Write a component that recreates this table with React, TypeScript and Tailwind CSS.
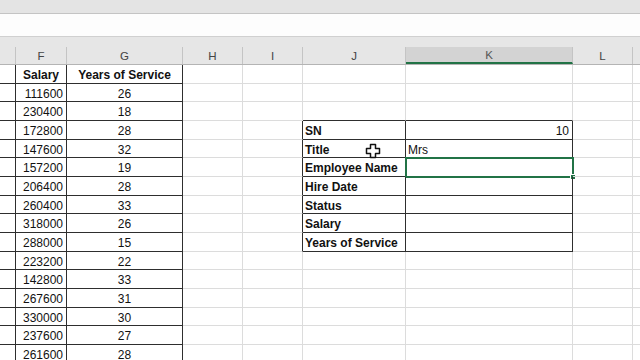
import React from 'react';

// visible columns E..M (E and M are clipped by the window)
const COLS = [
  { key: 'E', w: 'w-[16px]', label: '' },
  { key: 'F', w: 'w-[51px]', label: 'F' },
  { key: 'G', w: 'w-[116px]', label: 'G' },
  { key: 'H', w: 'w-[60px]', label: 'H' },
  { key: 'I', w: 'w-[60px]', label: 'I' },
  { key: 'J', w: 'w-[103px]', label: 'J' },
  { key: 'K', w: 'w-[167px]', label: 'K' },
  { key: 'L', w: 'w-[60px]', label: 'L' },
  { key: 'M', w: 'w-[20px]', label: '' },
];

const salaries = [
  ['111600', '26'],
  ['230400', '18'],
  ['172800', '28'],
  ['147600', '32'],
  ['157200', '19'],
  ['206400', '28'],
  ['260400', '33'],
  ['318000', '26'],
  ['288000', '15'],
  ['223200', '22'],
  ['142800', '33'],
  ['267600', '31'],
  ['330000', '30'],
  ['237600', '27'],
  ['261600', '28'],
];

const labels = ['SN', 'Title', 'Employee Name', 'Hire Date', 'Status', 'Salary', 'Years of Service'];

type CellText = { text: string; bold?: boolean; align: 'left' | 'right' | 'center' };

function cellContent(c: number, r: number): CellText | null {
  if (c === 1) {
    if (r === 0) return { text: 'Salary', bold: true, align: 'center' };
    return { text: salaries[r - 1][0], align: 'right' };
  }
  if (c === 2) {
    if (r === 0) return { text: 'Years of Service', bold: true, align: 'center' };
    return { text: salaries[r - 1][1], align: 'center' };
  }
  if (c === 5 && r >= 3 && r <= 9) return { text: labels[r - 3], bold: true, align: 'left' };
  if (c === 6 && r === 3) return { text: '10', align: 'right' };
  if (c === 6 && r === 4) return { text: 'Mrs', align: 'left' };
  return null;
}

// Excel's fat white cross pointer
const CrossCursor = () => (
  <svg width="16" height="16" viewBox="0 0 16 16" className="absolute left-[62px] top-[3px]">
    <path
      d="M5.5 1.5h5v4h4v5h-4v4h-5v-4h-4v-5h4z"
      fill="#ffffff"
      stroke="#111111"
      strokeWidth="1.5"
      strokeLinejoin="round"
    />
  </svg>
);

const Cell: React.FC<{ c: number; r: number }> = ({ c, r }) => {
  const leftTable = c <= 2;
  const inRight = r >= 3 && r <= 9;
  const rightTable = (c === 5 || c === 6) && inRight;
  const darkR = leftTable || rightTable || (c === 4 && inRight);
  const darkB = leftTable || rightTable || ((c === 5 || c === 6) && r === 2);
  const content = cellContent(c, r);
  const col = COLS[c];

  return (
    <div
      className={`relative shrink-0 h-full flex items-center pt-[2px] border-r border-b ${col.w} ${
        darkR ? 'border-r-[#2e2e2e]' : 'border-r-[#dcdcdc]'
      } ${darkB ? 'border-b-[#2e2e2e]' : 'border-b-[#dcdcdc]'} ${
        content?.align === 'right' ? 'justify-end pr-[3px]' : content?.align === 'center' ? 'justify-center' : 'justify-start pl-[2px]'
      }`}
    >
      {content && (
        <span className={`whitespace-nowrap leading-none ${content.bold ? 'font-bold' : ''}`}>{content.text}</span>
      )}
      {c === 5 && r === 4 && <CrossCursor />}
      {c === 6 && r === 5 && (
        <div className="absolute -left-[1px] -top-[1px] w-[169px] h-[21px] border-2 border-[#217346]">
          <div className="absolute -right-[4px] -bottom-[4px] w-[6px] h-[6px] bg-[#217346] border border-white" />
        </div>
      )}
    </div>
  );
};

export default function App() {
  const rows = Array.from({ length: 16 }, (_, i) => i);

  return (
    <div
      className="w-[640px] h-[360px] overflow-hidden bg-white text-[12px] text-[#111]"
      style={{ fontFamily: '"Liberation Sans", Arial, sans-serif' }}
    >
      <div className="h-[13px] bg-[#e4e4e4]" />
      <div className="h-[1px] bg-[#c4c4c4]" />
      <div className="h-[22px] bg-[#fdfdfd]" />
      <div className="h-[1px] bg-[#d0d0d0]" />
      <div className="h-[10px] bg-[#e6e6e6]" />

      {/* column headers */}
      <div className="flex h-[18px] bg-[#e6e6e6] border-b border-b-[#b4b4b4] text-[11.5px] text-[#444]">
        {COLS.map((col) => (
          <div
            key={col.key}
            className={`shrink-0 h-full flex items-center justify-center pt-[2px] border-r border-r-[#c4c4c4] ${col.w} ${
              col.key === 'K' ? 'bg-[#d3d3d3] border-b-2 border-b-[#217346] text-[#555]' : ''
            }`}
          >
            {col.label}
          </div>
        ))}
      </div>

      {rows.map((r) => (
        <div key={r} className={`flex ${r % 3 === 1 ? 'h-[18px]' : 'h-[19px]'}`}>
          {COLS.map((col, c) => (
            <Cell key={col.key} c={c} r={r} />
          ))}
        </div>
      ))}
    </div>
  );
}
